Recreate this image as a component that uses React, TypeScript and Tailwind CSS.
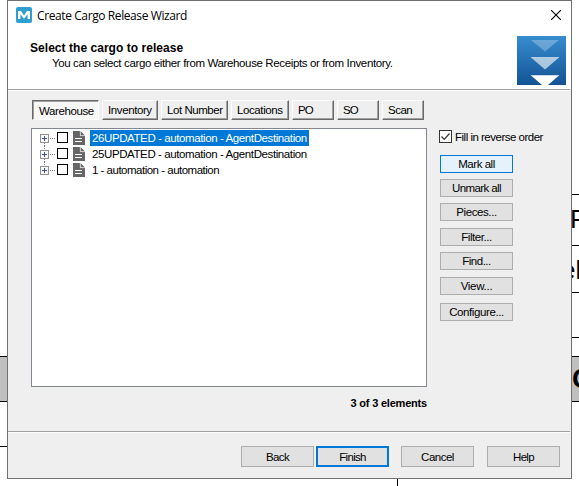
import React from "react";

const ui = "font-['Liberation_Sans',Arial,sans-serif]";

function Logo() {
  return (
    <svg width="16" height="16" viewBox="0 0 16 16" className="shrink-0">
      <rect width="16" height="16" rx="2" fill="#2f9fd0" />
      <path d="M2 12V4h3l3 4.4L11 4h3v8h-2.400V7.200L8 11.800 4.400 7.200V12z" fill="#fff" />
    </svg>
  );
}

function Banner() {
  return (
    <svg width="49" height="49" viewBox="0 0 49 49" className="shrink-0">
      <defs>
        <linearGradient id="blue" x1="0" y1="0" x2="0" y2="1">
          <stop offset="0" stopColor="#378dcf" />
          <stop offset="1" stopColor="#135394" />
        </linearGradient>
      </defs>
      <rect width="49" height="49" fill="url(#blue)" />
      <path d="M14 4h28L28 15.500z" fill="#fff" opacity=".27" />
      <path d="M14 21.500h28L28 33.500z" fill="#fff" opacity=".62" />
      <path d="M14 21h28v1H14zM14 39h28v1H14z" fill="#fff" opacity=".5" />
      <path d="M14 39.500h28L31 49h-6z" fill="#fff" />
    </svg>
  );
}

function PageIcon() {
  return (
    <svg width="12" height="14" viewBox="0 0 12 14" className="mx-[5px] shrink-0">
      <path d="M0 0h7v5h5v9H0z" fill="#666" />
      <path d="M7.500 0L12 4.500H7.500z" fill="#666" />
      <path d="M7.300 0v4.700H12" fill="none" stroke="#ddd" strokeWidth=".6" />
      <path d="M2 7.500h7M2 10.500h7" stroke="#fff" strokeWidth="1" />
    </svg>
  );
}

function Expander({ top, bottom }: { top: boolean; bottom: boolean }) {
  return (
    <svg width="17" height="16" viewBox="0 0 17 16" shapeRendering="crispEdges" className="shrink-0">
      {top && <path d="M4.500 0v4" stroke="#808080" strokeDasharray="1 1" />}
      {bottom && <path d="M4.500 13v3" stroke="#808080" strokeDasharray="1 1" />}
      <path d="M10 8.500h6" stroke="#808080" strokeDasharray="1 1" />
      <rect x=".5" y="4.500" width="8" height="8" fill="#f8f8f8" stroke="#919191" />
      <path d="M2 8.500h5M4.500 6v5" stroke="#3b4f9b" />
    </svg>
  );
}

function Tab({ label, className, active }: { label: string; className: string; active?: boolean }) {
  const edge = active
    ? "border-t-[#696969] border-l-[#696969] border-r-white border-b-white bg-[#f7f7f7] pl-[6px] pt-[3px] shadow-[inset_1px_1px_0_#a0a0a0]"
    : "border-t-white border-l-white border-r-[#696969] border-b-[#696969] bg-[#efefef] pl-[5px] pt-[2px] shadow-[inset_-1px_-1px_0_#a0a0a0]";
  return (
    <button className={`flex h-5 items-center border text-[11.5px] leading-none whitespace-nowrap ${edge} ${className}`}>
      {label}
    </button>
  );
}

function Row({ label, selected, first, last, className }: { label: string; selected?: boolean; first?: boolean; last?: boolean; className: string }) {
  return (
    <div className="flex h-4 items-center">
      <Expander top={!first} bottom={!last} />
      <span className="mb-px size-[11px] shrink-0 border border-black bg-white" />
      <PageIcon />
      <span className={`flex h-4 items-center pt-[2px] pl-[2px] text-[11.5px] leading-none whitespace-nowrap ${selected ? "w-[219px] bg-[#0078d7] text-white" : ""} ${className}`}>
        {label}
      </span>
    </div>
  );
}

function Button({ label, className }: { label: string; className: string }) {
  return (
    <button className={`flex w-[73px] shrink-0 items-center justify-center pt-[2px] text-[11.5px] leading-none whitespace-nowrap ${className}`}>
      {label}
    </button>
  );
}

const plain = "border border-[#adadad] bg-[#e1e1e1]";

function LeftStrip() {
  return (
    <div className="h-[479px] w-[7px] shrink-0 pt-[356px]">
      <div className="h-[46px] border-y border-black bg-[#bfbfbf]" />
      <div className="h-[45px] border-b border-black" />
    </div>
  );
}

function RightStrip() {
  return (
    <div className="h-[479px] w-[7px] shrink-0 overflow-hidden text-[26px] whitespace-nowrap">
      <div className="h-[195px] border-b border-black" />
      <div className="flex h-[51px] items-center border-b border-black pb-[3px] leading-none"><span className="-ml-[2px]">F</span></div>
      <div className="flex h-[47px] items-center border-b border-black pt-[2px] leading-none"><span className="-ml-[11px]">el</span></div>
      <div className="h-[45px] border-b border-black" />
      <div className="h-[18px]" />
      <div className="flex h-[46px] items-center border-y border-black bg-[#bfbfbf] text-[28px] leading-none font-bold">C</div>
    </div>
  );
}

export default function App() {
  return (
    <div className={`h-[486px] w-[579px] overflow-hidden bg-white text-black ${ui}`}>
      <div className="flex">
        <LeftStrip />
        <main className="flex h-[479px] w-[565px] shrink-0 flex-col border border-[#707070] bg-[#efefef]">
          <header className="h-[88px] shrink-0 bg-white">
            <div className="flex h-[28px] items-center pl-2 pr-[10px]">
              <Logo />
              <h1 className="ml-[5px] grow pt-px font-['Open_Sans',sans-serif] text-[12px] leading-none tracking-[-0.4px]">Create Cargo Release Wizard</h1>
              <svg width="10" height="10" viewBox="0 0 10 10"><path d="M0 0l10 10M10 0L0 10" stroke="#000" strokeWidth="1.100" /></svg>
            </div>
            <div className="flex justify-between pt-[7px] pr-[5px] pl-[22px]">
              <div>
                <h2 className="pt-[5px] text-[12px] leading-[14px] font-bold tracking-[0.04px]">Select the cargo to release</h2>
                <p className="pt-px pl-[22px] text-[11.5px] leading-[14px] tracking-[-0.37px]">You can select cargo either from Warehouse Receipts or from Inventory.</p>
              </div>
              <Banner />
            </div>
          </header>
          <div className="mr-px h-[2px] shrink-0 border-t border-[#a0a0a0] bg-white" />

          <nav className="flex gap-[3px] pt-[9px] pl-6">
            <Tab active label="Warehouse" className="w-[67px] tracking-[-0.4px]" />
            <Tab label="Inventory" className="w-[56px] tracking-[-0.4px]" />
            <Tab label="Lot Number" className="w-[67px] tracking-[-0.45px]" />
            <Tab label="Locations" className="w-[58px] tracking-[-0.4px]" />
            <Tab label="PO" className="w-[42px] tracking-[-1px]" />
            <Tab label="SO" className="w-[42px] tracking-[-1px]" />
            <Tab label="Scan" className="w-[42px] tracking-[-0.5px]" />
          </nav>

          <div className="flex h-[311px] pt-2 pl-[23px]">
            <section className="w-[396px]">
              <div className="h-[259px] border border-[#828790] bg-white pt-px pl-2">
                <Row first selected label="26UPDATED - automation - AgentDestination" className="tracking-[-0.4px]" />
                <Row label="25UPDATED - automation - AgentDestination" className="tracking-[-0.4px]" />
                <Row last label="1 - automation - automation" className="tracking-[-0.5px]" />
              </div>
              <p className="pt-[10px] text-right text-[11px] leading-3 font-bold tracking-[-0.2px]">3 of 3 elements</p>
            </section>
            <aside className="flex flex-col pl-3">
              <label className="mt-[2px] flex h-[13px] items-center">
                <svg width="13" height="13" viewBox="0 0 13 13" className="shrink-0">
                  <rect x=".5" y=".5" width="12" height="12" fill="#fff" stroke="#333" />
                  <path d="M2.500 6.500l2.700 2.800L10.500 3.500" fill="none" stroke="#333" strokeWidth="1.200" />
                </svg>
                <span className="pt-[2px] pl-[3px] text-[11.5px] leading-none whitespace-nowrap tracking-[-0.5px]">Fill in reverse order</span>
              </label>
              <div className="mt-3 ml-px flex flex-col">
                <Button label="Mark all" className="h-[18px] border border-[#0078d7] bg-[#e5f1fb] tracking-[-0.45px]" />
                <Button label="Unmark all" className={`mt-[6px] h-[18px] tracking-[-0.6px] ${plain}`} />
                <Button label="Pieces..." className={`mt-[6px] h-[18px] tracking-[-0.4px] ${plain}`} />
                <Button label="Filter..." className={`mt-[7px] h-[18px] tracking-[-0.45px] ${plain}`} />
                <Button label="Find..." className={`mt-[6px] h-[18px] tracking-[-0.5px] ${plain}`} />
                <Button label="View..." className={`mt-[7px] h-[18px] tracking-[-0.3px] ${plain}`} />
                <Button label="Configure..." className={`mt-[8px] h-[18px] tracking-[-0.4px] ${plain}`} />
              </div>
            </aside>
          </div>

          <div className="mr-px h-[2px] shrink-0 border-t border-[#a0a0a0] bg-white" />
          <footer className="flex pt-[13px] pl-[233px]">
            <Button label="Back" className={`h-[21px] tracking-[-0.6px] ${plain}`} />
            <Button label="Finish" className="ml-[2px] h-[21px] border-2 border-[#0078d7] bg-[#e1e1e1] tracking-[-0.7px]" />
            <Button label="Cancel" className={`ml-3 h-[21px] tracking-[-0.5px] ${plain}`} />
            <Button label="Help" className={`ml-[13px] h-[21px] tracking-[-0.7px] ${plain}`} />
          </footer>
        </main>
        <RightStrip />
      </div>
      <div className="h-[7px] w-[398px] border-r border-black" />
    </div>
  );
}
